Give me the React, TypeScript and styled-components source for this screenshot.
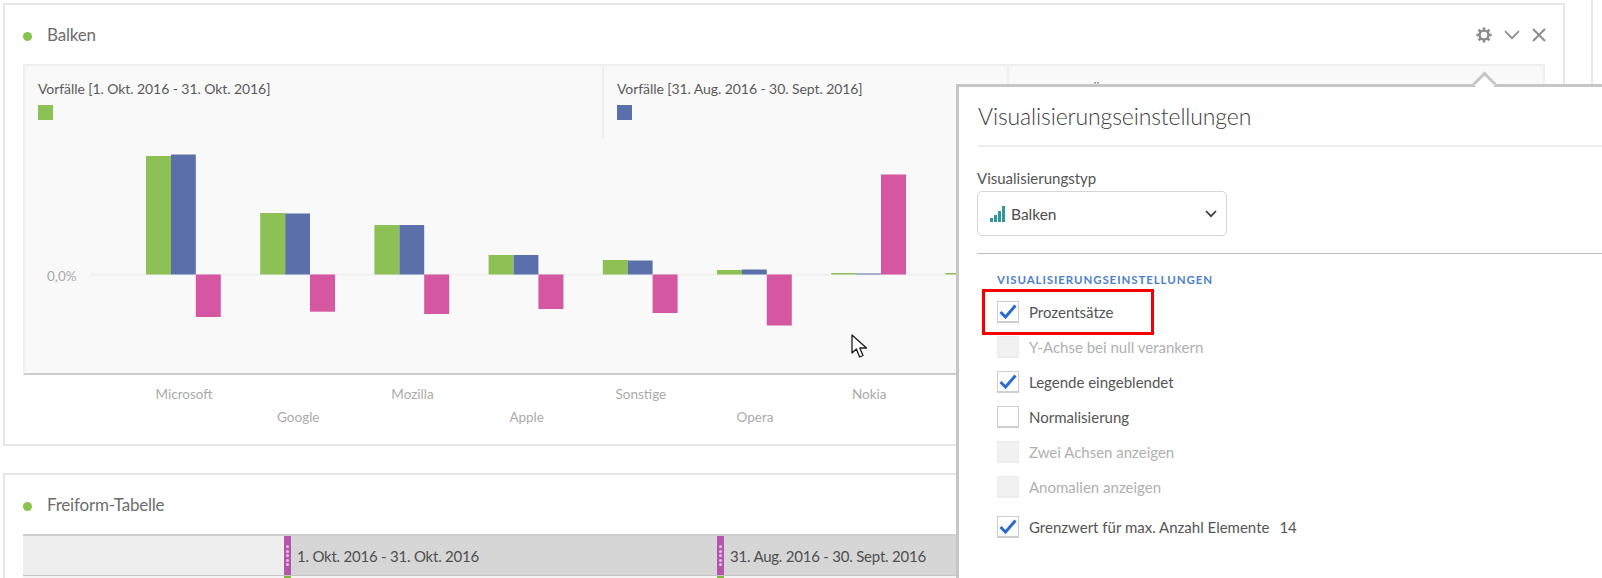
import React from "react";
import styled, { createGlobalStyle } from "styled-components";

const Global = createGlobalStyle`
  html, body { margin: 0; padding: 0; background: #fff; }
  * { box-sizing: border-box; }
  body { font-family: Lato, "Noto Sans", "Liberation Sans", sans-serif; -webkit-font-smoothing: subpixel-antialiased; }
`;

const Viewport = styled.div`
  position: relative;
  width: 1602px;
  height: 578px;
  overflow: hidden;
`;
const Page = styled.div`
  width: 1593px;
  height: 578px;
  padding: 3px 0 0 3px;
  border-right: 2px solid #e8e8e8;
  overflow: hidden;
`;
const Card = styled.section<{ $height: number }>`
  width: 1562px;
  height: ${(p) => p.$height}px;
  margin-bottom: 27px;
  border: 2px solid #e6e6e6;
  background: #fff;
`;
const CardHeader = styled.header`
  height: 59px;
  padding: 0 18px;
  display: flex;
  align-items: center;
`;
const Dot = styled.span`
  width: 9px;
  height: 9px;
  margin: 3px 15px 0 0;
  border-radius: 50%;
  background: #8bc34f;
`;
const CardTitle = styled.h2`
  flex: 1;
  margin: 0 0 1px;
  font-size: 17px;
  font-weight: 400;
  letter-spacing: -0.2px;
  color: #6d6d6d;
`;
const HeaderIcons = styled.div`
  display: flex;
  align-items: center;
  gap: 12px;
  margin-right: -1px;
  color: #8c8c8c;
`;
const Chart = styled.div`
  margin: 0 18px;
  width: 1522px;
  background: #f9f9f9;
  border-top: 2px solid #efefef;
  border-left: 2px solid #efefef;
  border-right: 2px solid #efefef;
  border-bottom: 2px solid #cccccc;
`;
const LegendRow = styled.div`
  display: flex;
  height: 73px;
`;
const LegendCol = styled.div<{ $width: number; $last?: boolean }>`
  width: ${(p) => p.$width}px;
  padding: 14px 13px 0;
  border-right: ${(p) => (p.$last ? "0" : "2px solid #efefef")};
  flex: none;
`;
const LegendText = styled.div<{ $tight?: boolean }>`
  font-size: 14px;
  letter-spacing: ${(p) => (p.$tight ? "-0.5px" : "-0.07px")};
  line-height: 18px;
  color: #5a5a5a;
  white-space: nowrap;
`;
const Swatch = styled.span<{ $color: string }>`
  display: block;
  width: 15px;
  height: 15px;
  margin-top: 7px;
  background: ${(p) => p.$color};
`;
const Plot = styled.svg`
  display: block;
  width: 1518px;
  height: 234px;
`;
const AxisGrid = styled.div`
  display: grid;
  grid-template-columns: repeat(13, 114.2px);
  grid-auto-rows: 23px;
  margin: 8px 0 0 122px;
`;
const AxisLabel = styled.span<{ $col: number; $row: number }>`
  grid-column: ${(p) => p.$col};
  grid-row: ${(p) => p.$row};
  justify-self: center;
  font-size: 13.5px;
  line-height: 23px;
  color: #ababab;
`;
const TableHead = styled.div`
  margin: 0 18px;
  width: 1522px;
  border-top: 2px solid #cfcfcf;
  display: grid;
  grid-template-columns: 261px 433px 1fr;
  height: 42px;
  border-bottom: 1px solid #c4c4c4;
`;
const BlankCell = styled.div`
  background: #eeeeee;
`;
const HeadCell = styled.div`
  display: flex;
  align-items: center;
  gap: 6px;
  background: #d6d6d6;
  font-size: 15px;
  letter-spacing: -0.22px;
  color: #4f4f4f;
  white-space: nowrap;
`;
const Grip = styled.span`
  width: 7px;
  height: 100%;
  padding: 9px 0;
  background: #b455ae;
  display: flex;
  flex-direction: column;
  align-items: center;
  justify-content: space-between;
  & > i {
    display: block;
    width: 3px;
    height: 3px;
    border-radius: 50%;
    background: #e6c3e3;
  }
`;
const SubRow = styled.div`
  margin: 0 18px;
  width: 1522px;
  display: grid;
  grid-template-columns: 261px 433px 1fr;
  height: 4px;
  background: #f4f4f4;
`;
const GreenGrip = styled.span`
  width: 7px;
  height: 4px;
  background: #80b83f;
`;

const Popover = styled.aside`
  position: absolute;
  left: 956px;
  top: 84px;
  width: 646px;
  height: 494px;
  padding-left: 18px;
  background: #fff;
  border-top: 3px solid #c6c6c6;
  border-left: 3px solid #c6c6c6;
`;
const Arrow = styled.span`
  position: absolute;
  left: 517px;
  top: -12px;
  width: 17px;
  height: 17px;
  background: #fff;
  border-top: 3px solid #c6c6c6;
  border-left: 3px solid #c6c6c6;
  transform: rotate(45deg);
`;
const PopoverTitle = styled.h3`
  height: 60px;
  margin: 0 0 0 1px;
  padding-top: 13px;
  border-bottom: 2px solid #eeeeee;
  font-size: 23px;
  line-height: 32px;
  font-weight: 300;
  letter-spacing: -0.13px;
  color: #404040;
`;
const FieldLabel = styled.label`
  display: block;
  margin-top: 21px;
  font-size: 15px;
  line-height: 20px;
  color: #555;
`;
const SelectBox = styled.div`
  width: 250px;
  height: 45px;
  margin-top: 3px;
  padding: 0 9px 0 12px;
  display: flex;
  align-items: center;
  gap: 6px;
  border: 1.5px solid #d6d6d6;
  border-radius: 5px;
  background: #fff;
  font-size: 15.5px;
  color: #4d4d4d;
  & > span { flex: 1; }
`;
const Rule = styled.hr`
  margin: 17px 0 0;
  border: 0;
  border-top: 1px solid #bdbdbd;
`;
const SectionLabel = styled.div`
  margin: 19px 0 0 20px;
  font-size: 11.5px;
  line-height: 14px;
  font-weight: 700;
  letter-spacing: 0.9px;
  color: #4f7fcb;
`;
const CheckList = styled.div`
  display: flex;
  flex-direction: column;
  gap: 13px;
  margin: 14px 0 0 20px;
`;
const CheckRow = styled.div<{ $spaced?: boolean }>`
  position: relative;
  display: flex;
  align-items: center;
  gap: 10px;
  height: 22px;
  margin-top: ${(p) => (p.$spaced ? 5 : 0)}px;
`;
const Box = styled.span<{ $disabled?: boolean }>`
  width: 22px;
  height: 22px;
  flex: none;
  display: flex;
  align-items: center;
  justify-content: center;
  background: ${(p) => (p.$disabled ? "#f1f1f1" : "#fff")};
  border: 1px solid ${(p) => (p.$disabled ? "#ececec" : "#cfcfcf")};
  border-bottom-width: 2px;
`;
const CheckText = styled.span<{ $disabled?: boolean }>`
  font-size: 15px;
  color: ${(p) => (p.$disabled ? "#b0b0b0" : "#555555")};
  white-space: nowrap;
`;
const LimitValue = styled.span`
  margin-left: 10px;
  font-size: 15px;
  color: #555555;
`;
const Highlight = styled.span`
  position: absolute;
  left: -15px;
  top: -12px;
  width: 172px;
  height: 46px;
  border: 3.5px solid #f40000;
  pointer-events: none;
`;
const Cursor = styled.svg`
  position: absolute;
  left: 851px;
  top: 334px;
`;

const Gear = () => (
  <svg width="16" height="16" viewBox="0 0 16 16" fill="none" stroke="#8c8c8c">
    <circle cx="8" cy="8" r="4.4" strokeWidth="2.4" />
    {[0, 45, 90, 135, 180, 225, 270, 315].map((a) => (
      <line key={a} x1="8" y1="0.4" x2="8" y2="3" strokeWidth="2.6" transform={`rotate(${a} 8 8)`} />
    ))}
  </svg>
);
const Chevron = () => (
  <svg width="16" height="10" viewBox="0 0 16 10" fill="none" stroke="#8c8c8c" strokeWidth="1.7">
    <path d="M1 1.2 L8 8.2 L15 1.2" />
  </svg>
);
const Close = () => (
  <svg width="14" height="14" viewBox="0 0 14 14" fill="none" stroke="#8c8c8c" strokeWidth="2">
    <path d="M1 1 L13 13 M13 1 L1 13" />
  </svg>
);
const BarsIcon = () => (
  <svg width="15" height="16" viewBox="0 0 15 16" fill="#2f9a9c">
    <rect x="0" y="12" width="3" height="4" />
    <rect x="4" y="9" width="3" height="7" />
    <rect x="8" y="5" width="3" height="11" />
    <rect x="12" y="0" width="3" height="16" />
  </svg>
);
const SelectChevron = () => (
  <svg width="12" height="8" viewBox="0 0 12 8" fill="none" stroke="#3f3f3f" strokeWidth="1.8">
    <path d="M1 1 L6 6.2 L11 1" />
  </svg>
);
const Tick = () => (
  <svg width="18" height="16" viewBox="0 0 18 16" fill="none" stroke="#2c6ccf" strokeWidth="3">
    <path d="M1.5 8 L6.5 13 L16.5 1.5" />
  </svg>
);

const GREEN = "#8dc055";
const BLUE = "#5b70aa";
const PINK = "#d557a2";
const ZERO = 274.5;
const groups = [
  [156, 154.5, 317],
  [213, 213.5, 311.7],
  [225, 225, 314],
  [255, 255, 309],
  [260, 260.5, 313],
  [270, 269.5, 325.5],
  [273, 273.5, 174.5],
  [273, 274, 300],
];
const axis = ["Microsoft", "Google", "Mozilla", "Apple", "Sonstige", "Opera", "Nokia"];
const checks: { text: string; checked?: boolean; disabled?: boolean; highlight?: boolean; spaced?: boolean; value?: string }[] = [
  { text: "Prozentsätze", checked: true, highlight: true },
  { text: "Y-Achse bei null verankern", disabled: true },
  { text: "Legende eingeblendet", checked: true },
  { text: "Normalisierung" },
  { text: "Zwei Achsen anzeigen", disabled: true },
  { text: "Anomalien anzeigen", disabled: true },
  { text: "Grenzwert für max. Anzahl Elemente", checked: true, spaced: true, value: "14" },
];

export default function App() {
  return (
    <Viewport>
      <Global />
      <Page>
        <Card $height={443}>
          <CardHeader>
            <Dot />
            <CardTitle>Balken</CardTitle>
            <HeaderIcons>
              <Gear />
              <Chevron />
              <Close />
            </HeaderIcons>
          </CardHeader>
          <Chart>
            <LegendRow>
              <LegendCol $width={579}>
                <LegendText>Vorfälle [1. Okt. 2016 - 31. Okt. 2016]</LegendText>
                <Swatch $color={GREEN} />
              </LegendCol>
              <LegendCol $width={405}>
                <LegendText>Vorfälle [31. Aug. 2016 - 30. Sept. 2016]</LegendText>
                <Swatch $color={BLUE} />
              </LegendCol>
              <LegendCol $width={400} $last>
                <LegendText $tight>Prozentuale Änderung</LegendText>
                <Swatch $color={PINK} />
              </LegendCol>
            </LegendRow>
            <Plot viewBox="25 139 1518 234">
              <line x1="90" x2="1545" y1={ZERO} y2={ZERO} stroke="#eeeeee" strokeWidth="1.5" />
              <text x="47" y="281" fontSize="13.5" fill="#a8a8a8">0,0%</text>
              {groups.map(([g, b, p], i) => {
                const x = 146 + i * 114.2;
                return (
                  <g key={i}>
                    <rect x={x} y={g} width={25} height={ZERO - g} fill={GREEN} />
                    <rect x={x + 25} y={b} width={24.8} height={ZERO - b} fill={BLUE} />
                    <rect
                      x={x + 49.8}
                      y={Math.min(p, ZERO)}
                      width={25}
                      height={Math.abs(p - ZERO)}
                      fill={PINK}
                    />
                  </g>
                );
              })}
            </Plot>
          </Chart>
          <AxisGrid>
            {axis.map((name, i) => (
              <AxisLabel key={name} $col={i + 1} $row={i % 2 === 0 ? 1 : 2}>
                {name}
              </AxisLabel>
            ))}
          </AxisGrid>
        </Card>
        <Card $height={200}>
          <CardHeader>
            <Dot />
            <CardTitle>Freiform-Tabelle</CardTitle>
          </CardHeader>
          <TableHead>
            <BlankCell />
            <HeadCell>
              <Grip><i /><i /><i /><i /><i /></Grip>
              1. Okt. 2016 - 31. Okt. 2016
            </HeadCell>
            <HeadCell>
              <Grip><i /><i /><i /><i /><i /></Grip>
              31. Aug. 2016 - 30. Sept. 2016
            </HeadCell>
          </TableHead>
          <SubRow>
            <span />
            <GreenGrip />
            <GreenGrip />
          </SubRow>
        </Card>
      </Page>
      <Cursor width="17" height="25" viewBox="0 0 17 25">
        <path
          d="M1 1 L1 19 L5.4 15 L8.6 23 L12 21.5 L8.8 14 L15.5 14 Z"
          fill="#fff"
          stroke="#1c1c1c"
          strokeWidth="1.3"
          strokeLinejoin="round"
        />
      </Cursor>
      <Popover>
        <Arrow />
        <PopoverTitle>Visualisierungseinstellungen</PopoverTitle>
        <FieldLabel>Visualisierungstyp</FieldLabel>
        <SelectBox>
          <BarsIcon />
          <span>Balken</span>
          <SelectChevron />
        </SelectBox>
        <Rule />
        <SectionLabel>VISUALISIERUNGSEINSTELLUNGEN</SectionLabel>
        <CheckList>
          {checks.map((c) => (
            <CheckRow key={c.text} $spaced={c.spaced}>
              <Box $disabled={c.disabled}>{c.checked && <Tick />}</Box>
              <CheckText $disabled={c.disabled}>
                {c.text}
                {c.value && <LimitValue>{c.value}</LimitValue>}
              </CheckText>
              {c.highlight && <Highlight />}
            </CheckRow>
          ))}
        </CheckList>
      </Popover>
    </Viewport>
  );
}
